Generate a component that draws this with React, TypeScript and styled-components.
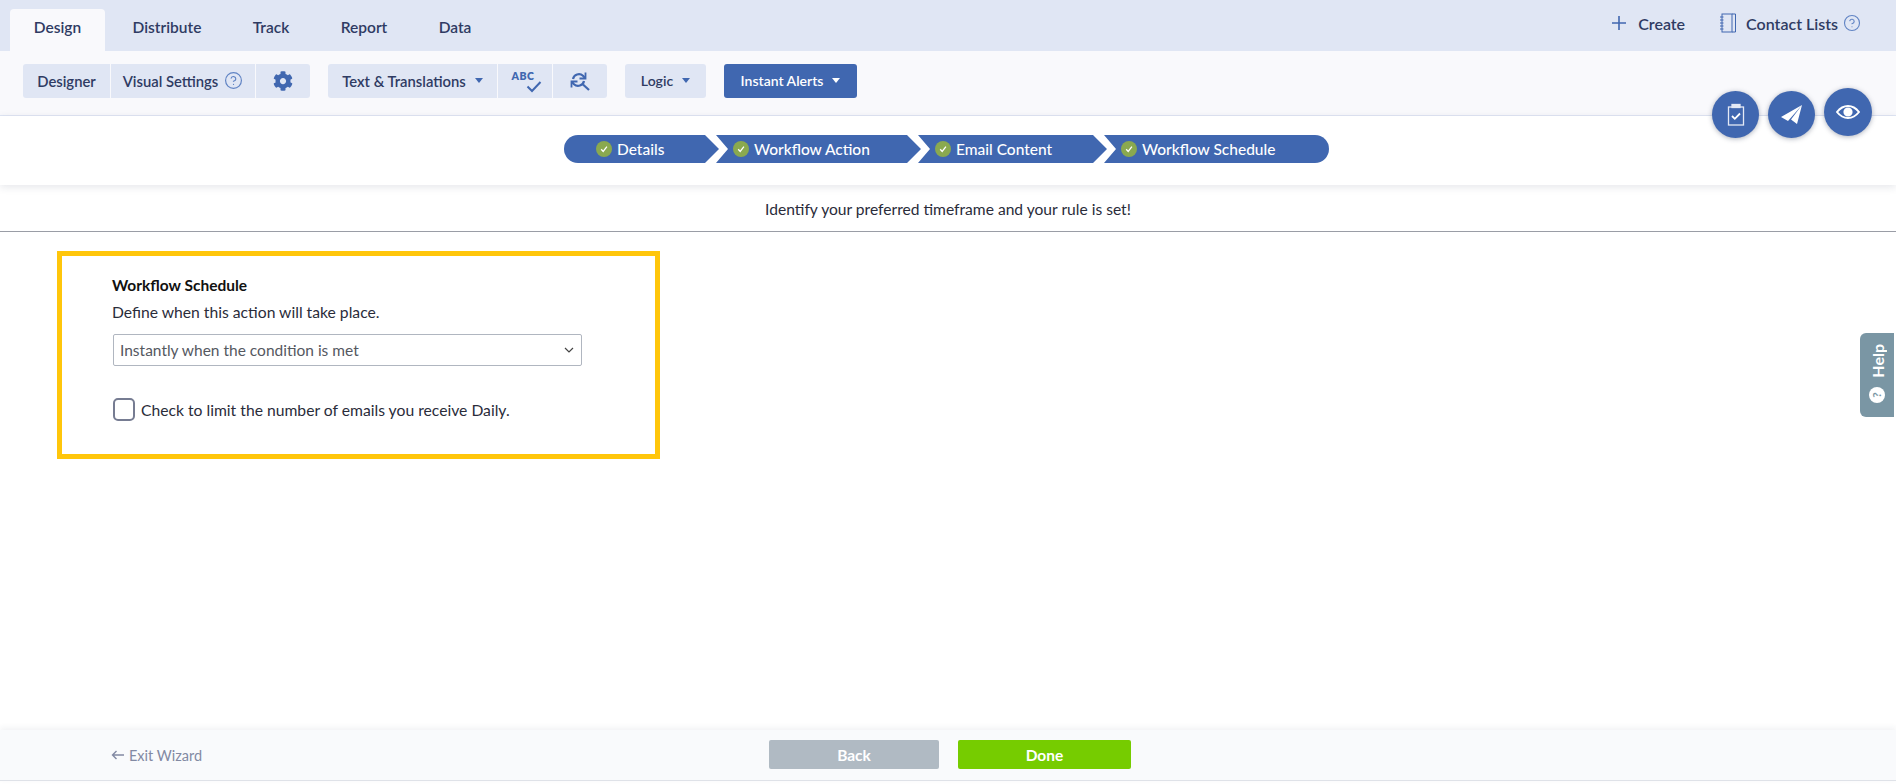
import React from "react";
import styled, { createGlobalStyle } from "styled-components";
import { FaCog } from "react-icons/fa";
import { FiHelpCircle } from "react-icons/fi";

const GlobalStyle = createGlobalStyle`
  html, body {
    margin: 0;
    padding: 0;
    background: #fff;
  }
  body {
    font-family: "Lato", "Open Sans", sans-serif;
    color: #2b3350;
  }
`;

const Page = styled.div`
  position: relative;
  width: 1896px;
  height: 784px;
  overflow: hidden;
  display: flex;
  flex-direction: column;
`;

const TabBar = styled.div`
  height: 51px;
  flex: none;
  box-sizing: border-box;
  padding: 9px 35px 0 10px;
  background: #e0e6f4;
  display: flex;
  align-items: flex-end;
`;

const Tab = styled.div<{ $active?: boolean; $width: number }>`
  width: ${(p) => p.$width}px;
  height: 42px;
  box-sizing: border-box;
  padding-bottom: 6px;
  display: flex;
  align-items: center;
  justify-content: center;
  font-size: 15.5px;
  font-weight: 600;
  color: #2f3b63;
  border-radius: 4px 4px 0 0;
  background: ${(p) => (p.$active ? "#f9f9fc" : "transparent")};
`;

const TopActions = styled.div`
  margin-left: auto;
  height: 42px;
  display: flex;
  align-items: center;
  transform: translateY(-7px);
`;

const TopLink = styled.div<{ $gap: number }>`
  display: flex;
  align-items: center;
  gap: ${(p) => p.$gap}px;
  margin-left: 35px;
  font-size: 16px;
  font-weight: 600;
  color: #2f3b63;
`;

const Toolbar = styled.div`
  height: 65px;
  flex: none;
  box-sizing: border-box;
  padding: 13px 0 0 23px;
  background: #f9f9fc;
  border-bottom: 1px solid #e0e6f4;
  display: flex;
`;

const ButtonGroup = styled.div<{ $gap: number }>`
  display: flex;
  gap: 1px;
  margin-right: ${(p) => p.$gap}px;
`;

const ToolButton = styled.div<{ $width: number; $primary?: boolean; $small?: boolean }>`
  width: ${(p) => p.$width}px;
  height: 34px;
  box-sizing: border-box;
  padding-bottom: 1px;
  display: flex;
  align-items: center;
  justify-content: center;
  gap: 6px;
  background: ${(p) => (p.$primary ? "#4067b0" : "#e0e6f4")};
  color: ${(p) => (p.$primary ? "#fff" : "#2f3b63")};
  font-size: ${(p) => (p.$small ? 14 : 14.8)}px;
  font-weight: 600;
  &:first-child {
    border-radius: 3px 0 0 3px;
  }
  &:last-child {
    border-radius: 0 3px 3px 0;
  }
  &:only-child {
    border-radius: 3px;
  }
`;

const Caret = styled.span<{ $light?: boolean }>`
  width: 0;
  height: 0;
  margin-left: 3px;
  border-left: 4px solid transparent;
  border-right: 4px solid transparent;
  border-top: 5px solid ${(p) => (p.$light ? "#fff" : "#4067b0")};
`;

const AbcMark = styled.span`
  position: relative;
  display: block;
  width: 30px;
  height: 24px;
  margin-left: 3px;
  font-size: 10.5px;
  font-weight: 800;
  letter-spacing: 0.5px;
  line-height: 14px;
  color: #4067b0;
  svg {
    position: absolute;
    right: 0;
    bottom: 0;
  }
`;

const StepBand = styled.div`
  height: 69px;
  flex: none;
  box-sizing: border-box;
  padding: 19px 0 0 564px;
  background: #fff;
  box-shadow: 0 2px 8px rgba(40, 50, 80, 0.12);
  display: flex;
  position: relative;
`;

const Step = styled.div<{ $width: number; $first?: boolean; $last?: boolean }>`
  width: ${(p) => p.$width}px;
  height: 28px;
  margin-left: ${(p) => (p.$first ? 0 : -3)}px;
  box-sizing: border-box;
  padding-left: ${(p) => (p.$first ? 32 : 17)}px;
  display: flex;
  align-items: center;
  gap: 5px;
  background: #4067b0;
  color: #fff;
  font-size: 15.5px;
  font-weight: 500;
  border-radius: ${(p) => (p.$first ? "14px 0 0 14px" : p.$last ? "0 14px 14px 0" : "0")};
  clip-path: ${(p) =>
    p.$last
      ? "polygon(0 0, 100% 0, 100% 100%, 0 100%, 12px 50%)"
      : p.$first
        ? "polygon(0 0, calc(100% - 14px) 0, 100% 50%, calc(100% - 14px) 100%, 0 100%)"
        : "polygon(0 0, calc(100% - 14px) 0, 100% 50%, calc(100% - 14px) 100%, 0 100%, 12px 50%)"};
`;

const StepCheck = styled.span`
  width: 16px;
  height: 16px;
  flex: none;
  border-radius: 50%;
  background: #8aa94f;
  display: flex;
  align-items: center;
  justify-content: center;
`;

const Intro = styled.div`
  height: 47px;
  flex: none;
  box-sizing: border-box;
  padding-top: 2px;
  border-bottom: 1px solid #9a9da6;
  display: flex;
  align-items: center;
  justify-content: center;
  font-size: 15.6px;
  color: #2a2c3a;
`;

const Content = styled.div`
  flex: 1;
  padding: 19px 0 0 57px;
`;

const Highlight = styled.div`
  width: 603px;
  height: 208px;
  box-sizing: border-box;
  border: 5px solid #ffc60b;
  padding: 19px 0 0 50px;
`;

const Heading = styled.div`
  font-size: 15.5px;
  font-weight: 700;
  color: #111;
  line-height: 20px;
`;

const Description = styled.div`
  margin-top: 7px;
  font-size: 15.7px;
  line-height: 20px;
  color: #2a2c3a;
`;

const SelectBox = styled.div`
  width: 469px;
  height: 32px;
  margin: 12px 0 0 1px;
  box-sizing: border-box;
  padding: 0 7px 0 6px;
  border: 1px solid #b0b6c0;
  border-radius: 2px;
  display: flex;
  align-items: center;
  justify-content: space-between;
  font-size: 15.5px;
  color: #55585f;
`;

const CheckRow = styled.div`
  margin: 32px 0 0 1px;
  display: flex;
  align-items: center;
  gap: 6px;
  font-size: 15.7px;
  color: #2a2c3a;
`;

const CheckBox = styled.span`
  width: 22px;
  height: 23px;
  box-sizing: border-box;
  border: 2px solid #767c92;
  border-radius: 5px;
`;

const Footer = styled.div`
  height: 51px;
  flex: none;
  margin-bottom: 3px;
  box-sizing: border-box;
  padding: 10px 0 0 111px;
  background: #f9fafc;
  border-bottom: 1px solid #dfe2e8;
  box-shadow: 0 -2px 6px rgba(40, 50, 80, 0.07);
  display: flex;
`;

const ExitLink = styled.div`
  width: 658px;
  height: 30px;
  display: flex;
  align-items: center;
  gap: 4px;
  font-size: 14.5px;
  color: #8289a3;
`;

const FooterButton = styled.div<{ $width: number; $color: string }>`
  width: ${(p) => p.$width}px;
  height: 29px;
  margin-right: 19px;
  display: flex;
  align-items: center;
  justify-content: center;
  border-radius: 2px;
  background: ${(p) => p.$color};
  color: #fff;
  font-size: 15.5px;
  font-weight: 700;
`;

const FloatingActions = styled.div`
  position: absolute;
  top: 88px;
  left: 1712px;
  display: flex;
  align-items: flex-start;
  gap: 9px;
`;

const RoundButton = styled.div<{ $size: number; $offset: number }>`
  width: ${(p) => p.$size}px;
  height: ${(p) => p.$size}px;
  margin-top: ${(p) => p.$offset}px;
  border-radius: 50%;
  background: #4067b0;
  box-shadow: 0 1px 5px rgba(30, 40, 70, 0.35);
  display: flex;
  align-items: center;
  justify-content: center;
`;

const HelpTab = styled.div`
  position: absolute;
  top: 333px;
  left: 1860px;
  width: 34px;
  height: 84px;
  box-sizing: border-box;
  padding-top: 11px;
  border-radius: 6px 0 0 6px;
  background: #7a96a4;
  color: #fff;
  display: flex;
  flex-direction: column;
  align-items: center;
  gap: 9px;
  font-size: 16px;
  font-weight: 700;
`;

const HelpLabel = styled.span`
  writing-mode: vertical-rl;
  transform: rotate(180deg);
`;

const HelpDot = styled.span`
  width: 16px;
  height: 16px;
  border-radius: 50%;
  background: #fff;
  color: #7a96a4;
  font-size: 12px;
  line-height: 16px;
  text-align: center;
  transform: rotate(-90deg);
`;

const Tick = () => (
  <svg width="10" height="10" viewBox="0 0 10 10" fill="none" stroke="#fff" strokeWidth="1.3">
    <path d="M2.2 5.2 4.2 7.4 7.9 2.6" />
  </svg>
);

const steps = [
  { label: "Details", width: 155, first: true },
  { label: "Workflow Action", width: 205 },
  { label: "Email Content", width: 189 },
  { label: "Workflow Schedule", width: 225, last: true },
];

const tabs = [
  { label: "Design", width: 95, active: true },
  { label: "Distribute", width: 124 },
  { label: "Track", width: 84 },
  { label: "Report", width: 102 },
  { label: "Data", width: 80 },
];

export default function App() {
  return (
    <Page>
      <GlobalStyle />
      <TabBar>
        {tabs.map((t) => (
          <Tab key={t.label} $width={t.width} $active={t.active}>
            {t.label}
          </Tab>
        ))}
        <TopActions>
          <TopLink $gap={12}>
            <svg width="14" height="14" viewBox="0 0 14 14" stroke="#4067b0" strokeWidth="1.6">
              <path d="M7 0v14M0 7h14" />
            </svg>
            Create
          </TopLink>
          <TopLink $gap={10}>
            <svg width="16" height="20" viewBox="0 0 16 20" fill="none" stroke="#4067b0" strokeWidth="1">
              <rect x="2" y="1" width="10" height="18" />
              <path d="M12 1h3.500v18H12M0 4h3.500M0 7h3.500M0 10h3.500M0 13h3.500M0 16h3.500" />
            </svg>
            <span>Contact Lists</span>
            <FiHelpCircle size={18} color="#6184c4" strokeWidth={1.5} style={{ marginLeft: -5 }} />
          </TopLink>
        </TopActions>
      </TabBar>

      <Toolbar>
        <ButtonGroup $gap={18}>
          <ToolButton $width={87}>Designer</ToolButton>
          <ToolButton $width={144}>
            Visual Settings
            <FiHelpCircle size={19} color="#6184c4" strokeWidth={1.5} />
          </ToolButton>
          <ToolButton $width={54}>
            <FaCog size={20} color="#4067b0" />
          </ToolButton>
        </ButtonGroup>
        <ButtonGroup $gap={18}>
          <ToolButton $width={169}>
            Text &amp; Translations
            <Caret />
          </ToolButton>
          <ToolButton $width={54}>
            <AbcMark>
              ABC
              <svg width="16" height="13" viewBox="0 0 16 13" fill="none" stroke="#4067b0" strokeWidth="2">
                <path d="M1.500 6.500 6 11 14.500 2" />
              </svg>
            </AbcMark>
          </ToolButton>
          <ToolButton $width={54}>
            <svg width="20" height="20" viewBox="0 0 20 20" fill="none" stroke="#4067b0" strokeWidth="2.200">
              <path d="M3 8a6 6 0 0 1 10-3.200L15 7" />
              <path d="M15.500 1.500V7.500H9.500" strokeWidth="1.800" />
              <path d="M14 10a6 6 0 0 1-10 3.200L2 11" />
              <path d="M1.500 16.500V10.500H7.500" strokeWidth="1.800" />
              <path d="M13 13.500 19 19" />
            </svg>
          </ToolButton>
        </ButtonGroup>
        <ButtonGroup $gap={18}>
          <ToolButton $width={81} $small>
            Logic
            <Caret />
          </ToolButton>
        </ButtonGroup>
        <ButtonGroup $gap={0}>
          <ToolButton $width={133} $primary $small>
            Instant Alerts
            <Caret $light />
          </ToolButton>
        </ButtonGroup>
      </Toolbar>

      <StepBand>
        {steps.map((s) => (
          <Step key={s.label} $width={s.width} $first={s.first} $last={s.last}>
            <StepCheck>
              <Tick />
            </StepCheck>
            {s.label}
          </Step>
        ))}
      </StepBand>

      <Intro>Identify your preferred timeframe and your rule is set!</Intro>

      <Content>
        <Highlight>
          <Heading>Workflow Schedule</Heading>
          <Description>Define when this action will take place.</Description>
          <SelectBox>
            Instantly when the condition is met
            <svg width="10" height="6" viewBox="0 0 10 6" fill="none" stroke="#444" strokeWidth="1.200">
              <path d="M1 1 5 5 9 1" />
            </svg>
          </SelectBox>
          <CheckRow>
            <CheckBox />
            Check to limit the number of emails you receive Daily.
          </CheckRow>
        </Highlight>
      </Content>

      <Footer>
        <ExitLink>
          <svg width="14" height="10" viewBox="0 0 14 10" fill="none" stroke="#8289a3" strokeWidth="1.400">
            <path d="M13 5H2M5.500 1 1.500 5l4 4" />
          </svg>
          Exit Wizard
        </ExitLink>
        <FooterButton $width={170} $color="#b0bac3">
          Back
        </FooterButton>
        <FooterButton $width={173} $color="#76cc00">
          Done
        </FooterButton>
      </Footer>

      <FloatingActions>
        <RoundButton $size={47} $offset={3}>
          <svg width="18" height="23" viewBox="0 0 18 23" fill="none" stroke="#e4e9f5" strokeWidth="1.300">
            <rect x="1.500" y="4" width="15" height="18" />
            <rect x="5" y="1.500" width="8" height="3" fill="#e4e9f5" />
            <path d="M5 13l2.800 2.800L13 10.500" stroke="#fff" strokeWidth="1.800" />
          </svg>
        </RoundButton>
        <RoundButton $size={47} $offset={3}>
          <svg width="21" height="19" viewBox="0 0 21 19" fill="#fff">
            <path d="M21 0 0 12l7 4zM21 0 10 14.500 16 19z" />
          </svg>
        </RoundButton>
        <RoundButton $size={48} $offset={0}>
          <svg width="24" height="14" viewBox="0 0 24 14" fill="none" stroke="#fff" strokeWidth="2">
            <path d="M1 7c3-3.800 7-6 11-6s8 2.200 11 6c-3 3.800-7 6-11 6S4 10.800 1 7z" />
            <circle cx="12" cy="7" r="3.600" fill="#fff" />
          </svg>
        </RoundButton>
      </FloatingActions>

      <HelpTab>
        <HelpLabel>Help</HelpLabel>
        <HelpDot>?</HelpDot>
      </HelpTab>
    </Page>
  );
}
